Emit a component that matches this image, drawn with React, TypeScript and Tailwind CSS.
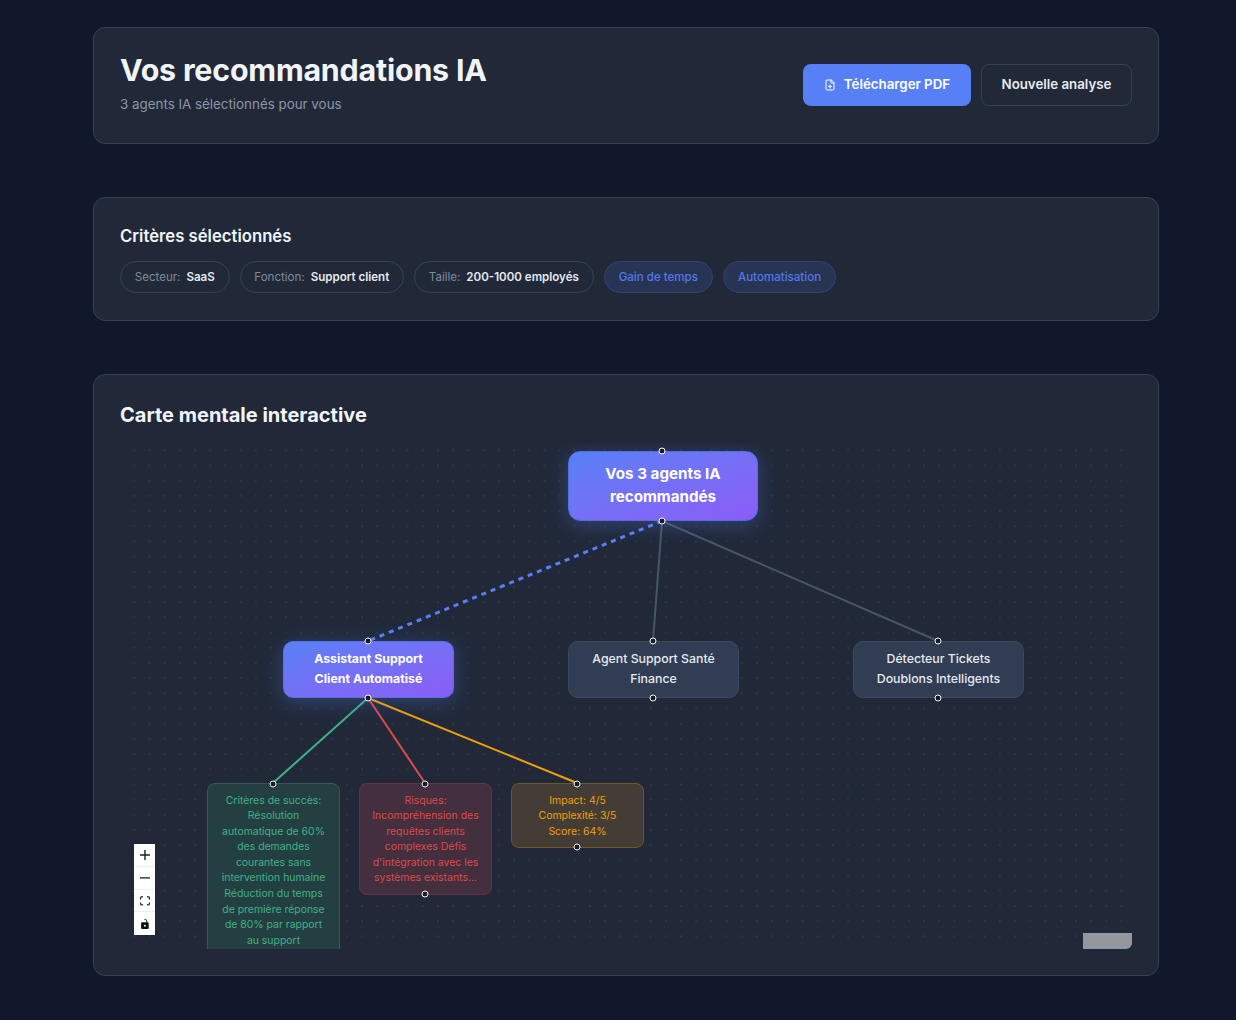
import { FilePlus } from "lucide-react";

const Handle = ({ x, y }: { x: number; y: number }) => (
  <span
    className="absolute w-[7px] h-[7px] rounded-full bg-[#1a1a2e] border-[1.5px] border-white -translate-x-1/2 -translate-y-1/2"
    style={{ left: x + 0.3, top: y }}
  />
);

const edges = [
  { x1: 542, y1: 78, x2: 248, y2: 198, c: "#5780f7", w: 3, dash: "5 5" },
  { x1: 542, y1: 78, x2: 533, y2: 198, c: "#475569", w: 2 },
  { x1: 542, y1: 78, x2: 818, y2: 198, c: "#475569", w: 2 },
  { x1: 248, y1: 255, x2: 153, y2: 340, c: "#3fb184", w: 2 },
  { x1: 248, y1: 255, x2: 305, y2: 340, c: "#dc4a4a", w: 2 },
  { x1: 248, y1: 255, x2: 457, y2: 340, c: "#f09e0b", w: 2 },
];

const Chip = ({ k, v }: { k: string; v: string }) => (
  <div className="h-8 pt-[1px] px-[13.8px] rounded-full border border-[#334155] flex items-center gap-[6px] text-[11.55px]">
    <span className="text-[#7f8a9c]">{k}</span>
    <span className="text-[#e6e9ef] font-semibold">{v}</span>
  </div>
);

const Tag = ({ t }: { t: string }) => (
  <div className="h-8 pt-[1px] px-[14px] rounded-full border border-[#2f4272] bg-[#283454] flex items-center text-[11.55px] font-medium text-[#5278e8]">
    {t}
  </div>
);

export default function App() {
  return (
    <div
      className="min-h-[1020px] bg-[#11182b] pl-[93px] pt-[27px] pb-[44px]"
      style={{ fontFamily: "Inter, sans-serif" }}
    >
      <div className="w-[1066px] flex flex-col gap-[53px]">
        <section className="h-[117px] rounded-xl bg-[#212939] border border-[#334155] px-[26px] flex items-center justify-between">
          <div className="-mt-[7px]">
            <h1 className="text-[30.4px] leading-[38px] font-bold text-[#f1f4f9] tracking-[-0.2px]">Vos recommandations IA</h1>
            <p className="text-[13.36px] leading-[19px] mt-[6px] text-[#8b95a7]">3 agents IA sélectionnés pour vous</p>
          </div>
          <div className="flex gap-[10px] -mt-[1px]">
            <button className="h-[42px] w-[168px] rounded-lg bg-[#5780f7] text-white text-[13.3px] font-semibold flex items-center justify-center gap-[8px]">
              <FilePlus size={12} strokeWidth={2} />
              Télécharger PDF
            </button>
            <button className="h-[42px] w-[151px] rounded-lg border border-[#334155] text-[#e6e9ef] text-[13.3px] font-semibold flex items-center justify-center">
              Nouvelle analyse
            </button>
          </div>
        </section>

        <section className="h-[124px] rounded-xl bg-[#212939] border border-[#334155] px-[26px] pt-[26px]">
          <h2 className="text-[16.7px] leading-[24px] font-semibold text-[#f1f4f9]">Critères sélectionnés</h2>
          <div className="flex gap-[10px] mt-[13px]">
            <Chip k="Secteur:" v="SaaS" />
            <Chip k="Fonction:" v="Support client" />
            <Chip k="Taille:" v="200-1000 employés" />
            <Tag t="Gain de temps" />
            <Tag t="Automatisation" />
          </div>
        </section>

        <section className="h-[602px] rounded-xl bg-[#212939] border border-[#334155] px-[26px] pt-[26px]">
          <h2 className="text-[20px] leading-[28px] font-bold text-[#f1f4f9]">Carte mentale interactive</h2>
          <div className="relative mt-[14px] h-[506px] overflow-hidden bg-[radial-gradient(#333e52_0.6px,transparent_0.8px)] bg-[size:15.2px_15.2px] bg-[position:6.7px_-0.3px]">
            <svg className="absolute inset-0 w-full h-full">
              {edges.map((e, i) => (
                <line key={i} x1={e.x1} y1={e.y1} x2={e.x2} y2={e.y2} stroke={e.c} strokeWidth={e.w} strokeDasharray={e.dash} />
              ))}
            </svg>

            <div className="absolute left-[448px] top-[8px] w-[190px] h-[70px] pb-[2px] rounded-xl border border-[#4d70dc] bg-gradient-to-br from-[#5780f7] to-[#8b5cf6] shadow-[0_4px_20px_rgba(91,130,248,0.3)] flex items-center justify-center text-center text-white text-[15.2px] leading-[23px] font-bold">
              Vos 3 agents IA<br />recommandés
            </div>
            <Handle x={542} y={8} />
            <Handle x={542} y={77.5} />

            <div className="absolute left-[163px] top-[198px] w-[171px] h-[57px] pb-[1.6px] rounded-[10px] border-[1.5px] border-[#4f74e6] bg-gradient-to-br from-[#5780f7] to-[#8b5cf6] shadow-[0_4px_20px_rgba(91,130,248,0.3)] flex items-center justify-center text-center text-white text-[12.35px] leading-[19.5px] font-bold">
              Assistant Support<br />Client Automatisé
            </div>
            <Handle x={248} y={198} />
            <Handle x={248} y={255} />

            <div className="absolute left-[448px] top-[198px] w-[171px] h-[57px] pb-[1.6px] rounded-[10px] border border-[#3d495d] bg-[#313d52] flex items-center justify-center text-center text-[#e6e9ef] text-[12.3px] leading-[19.5px] font-medium">
              Agent Support Santé<br />Finance
            </div>
            <Handle x={533} y={198} />
            <Handle x={533} y={255} />

            <div className="absolute left-[733px] top-[198px] w-[171px] h-[57px] pb-[1.6px] rounded-[10px] border border-[#3d495d] bg-[#313d52] flex items-center justify-center text-center text-[#e6e9ef] text-[12.3px] leading-[19.5px] font-medium">
              Détecteur Tickets<br />Doublons Intelligents
            </div>
            <Handle x={818} y={198} />
            <Handle x={818} y={255} />

            <div className="absolute left-[87px] top-[340px] w-[133px] h-[190px] rounded-lg border border-[#2f5a55] bg-[#243f42] pt-[8.7px] text-center text-[#3fb184] text-[10.45px] leading-[15.55px]">
              Critères de succès:<br />Résolution<br />automatique de 60%<br />des demandes<br />courantes sans<br />intervention humaine<br />Réduction du temps<br />de première réponse<br />de 80% par rapport<br />au support
            </div>
            <Handle x={153} y={340.5} />

            <div className="absolute left-[239px] top-[340px] w-[133px] h-[112px] rounded-lg border border-[#643342] bg-[#432f3e] pt-[8.7px] text-center text-[#dc4a4a] text-[10.45px] leading-[15.55px]">
              Risques:<br />Incompréhension des<br />requêtes clients<br />complexes Défis<br />d'intégration avec les<br />systèmes existants...
            </div>
            <Handle x={305} y={340.5} />
            <Handle x={305} y={451} />

            <div className="absolute left-[391px] top-[340px] w-[133px] h-[65px] rounded-lg border border-[#6c5828] bg-[#443d35] pt-[8.7px] text-center text-[#f09e0b] text-[10.45px] leading-[15.55px]">
              Impact: 4/5<br />Complexité: 3/5<br />Score: 64%
            </div>
            <Handle x={457} y={340.5} />
            <Handle x={457} y={404.3} />

            <div className="absolute left-[14px] top-[401px] w-[21px] flex flex-col bg-white shadow-[0_0_2px_1px_rgba(0,0,0,0.08)]">
              <div className="h-[23px] flex items-center justify-center border-b border-[#eeeeee]">
                <svg viewBox="0 0 32 32" className="w-[10px] h-[10px] fill-[#222]"><path d="M32 18.286H18.286V32h-4.572V18.286H0v-4.572h13.714V0h4.572v13.714H32v4.572z" /></svg>
              </div>
              <div className="h-[23px] flex items-center justify-center border-b border-[#eeeeee]">
                <svg viewBox="0 0 32 5" className="w-[10px] h-[2px] fill-[#222]"><path d="M0 0h32v4.2H0z" /></svg>
              </div>
              <div className="h-[22px] flex items-center justify-center border-b border-[#eeeeee]">
                <svg viewBox="0 0 32 30" className="w-[10px] h-[10px] fill-[#222]"><path d="M3.692 4.63c0-.53.4-.938.939-.938h5.215V0H4.708C2.13 0 0 2.054 0 4.63v5.216h3.692V4.631zM27.354 0h-5.2v3.692h5.17c.53 0 .984.4.984.939v5.215H32V4.631A4.624 4.624 0 0027.354 0zm.954 24.83c0 .532-.4.94-.939.94h-5.215v3.768h5.215c2.577 0 4.631-2.13 4.631-4.707v-5.139h-3.692v5.139zm-23.677.94c-.531 0-.939-.4-.939-.94v-5.138H0v5.139c0 2.577 2.13 4.707 4.708 4.707h5.138V25.77H4.631z" /></svg>
              </div>
              <div className="h-[23px] flex items-center justify-center">
                <svg viewBox="0 0 25 32" className="w-[10px] h-[10px] fill-[#111]"><path d="M21.333 10.667H19.81V7.619C19.81 3.429 16.38 0 12.19 0c-4.114 1.828-1.37 2.133.305 2.438 1.676.305 4.42 2.59 4.42 5.181v3.048H3.047A3.056 3.056 0 000 13.714v15.238A3.056 3.056 0 003.048 32h18.285a3.056 3.056 0 003.048-3.048V13.714a3.056 3.056 0 00-3.048-3.047zM12.19 24.533a3.056 3.056 0 01-3.047-3.047 3.056 3.056 0 013.047-3.048 3.056 3.056 0 013.048 3.048 3.056 3.056 0 01-3.048 3.047z" /></svg>
              </div>
            </div>

            <div className="absolute right-0 bottom-0 w-[49px] h-[16px] rounded-br-[6px] bg-[#93979f] flex items-center justify-center text-[9.5px] leading-none text-[#999999] whitespace-nowrap overflow-hidden">
              React Flow
            </div>
          </div>
        </section>
      </div>
    </div>
  );
}
